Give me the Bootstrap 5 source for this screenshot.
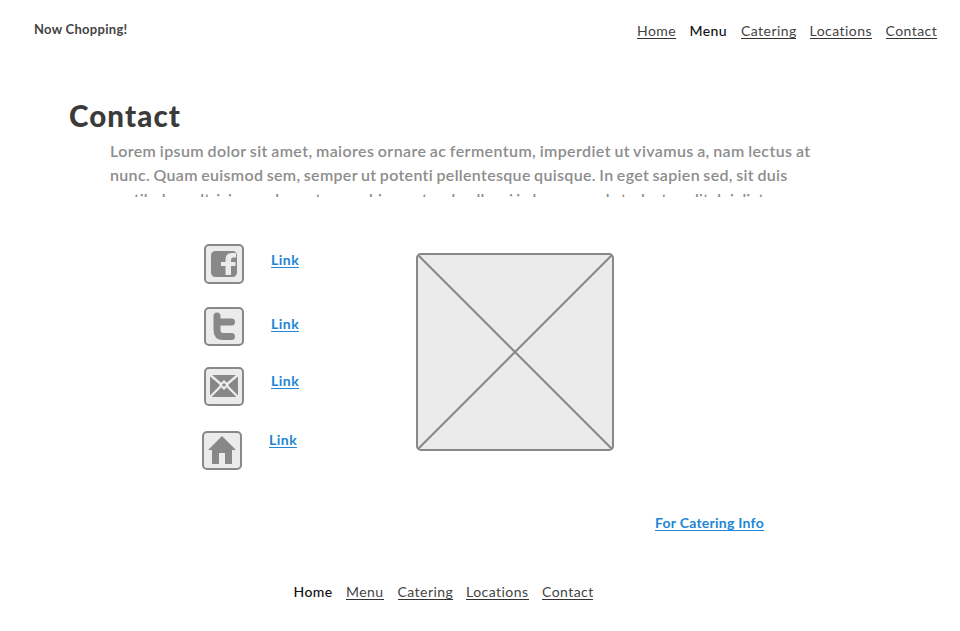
<!DOCTYPE html>
<html lang="en">
<head>
<meta charset="utf-8">
<meta name="viewport" content="width=device-width, initial-scale=1">
<title>Now Chopping! - Contact</title>
<link href="https://cdn.jsdelivr.net/npm/bootstrap@5.3.0/dist/css/bootstrap.min.css" rel="stylesheet">
<style>
body{font-family:"Lato","Noto Sans",sans-serif;color:#3b3b3b;background:#fff;height:631px;overflow:hidden}
.topbar{height:60px;padding:20px 23.5px 0 34px}
.brand-name{font-size:13px;font-weight:700;line-height:19px;letter-spacing:.28px;color:#444}
.site-nav{font-size:14px;line-height:20px;column-gap:13.5px}
.site-nav a{color:#444;text-decoration:none;border-bottom:1px solid #333;height:18px;line-height:20px;white-space:nowrap;letter-spacing:.45px}
.site-nav a.current{color:#111;border-color:transparent;font-weight:500;letter-spacing:.4px}
.w-home{width:39px}.w-menu{width:38px}.w-cat{width:55px}.w-loc{width:62.5px}.w-con{width:51px}
.topbar .site-nav{padding-top:1px}
.page-title{font-size:29.5px;font-weight:900;line-height:36px;margin:38px 0 0 69px;color:#3b3b3b;letter-spacing:1.1px}
.intro{margin:5px 0 0 110px;width:740px;height:58px;overflow:hidden;font-size:16px;line-height:24px;font-weight:600;color:#8d8d8d;white-space:nowrap;word-spacing:-.9px}
.line-a{letter-spacing:.4px}.line-b{letter-spacing:.32px}.line-c{letter-spacing:.06px}
.details{padding:47px 0 0 202px;height:312px}
.channels{width:214px}
.channel{height:40px;column-gap:27px;margin-left:2px}
.channel svg{flex:none}
.channel.short{height:39px}
.blue-link{color:#2185d6;font-size:14px;font-weight:700;line-height:18px;height:17px;border-bottom:1px solid #2185d6;text-decoration:none;white-space:nowrap;letter-spacing:.25px}
.channel .blue-link{letter-spacing:.5px}
.first-link{margin-top:7px}.mail-link{margin-top:5px}
.space-bird{margin-top:23px}.space-mail{margin-top:21px}.space-home{margin-top:25px}
.photo{margin-top:9px}
.catering{padding-left:655px;height:73px;padding-top:5px}
.bottom{padding-left:293.5px}
</style>
</head>
<body>
<header class="topbar d-flex justify-content-between align-items-start">
  <span class="brand-name">Now Chopping!</span>
  <nav class="site-nav d-flex">
    <a class="w-home" href="#">Home</a><a class="w-menu current" href="#">Menu</a><a class="w-cat" href="#">Catering</a><a class="w-loc" href="#">Locations</a><a class="w-con" href="#">Contact</a>
  </nav>
</header>
<main>
  <h1 class="page-title">Contact</h1>
  <div class="intro">
    <div class="line-a">Lorem ipsum dolor sit amet, maiores ornare ac fermentum, imperdiet ut vivamus a, nam lectus at</div>
    <div class="line-b">nunc. Quam euismod sem, semper ut potenti pellentesque quisque. In eget sapien sed, sit duis</div>
    <div class="line-c">vestibulum ultricies, sed a metus morbi nec at sed nulla mi in hac, eu sed at a lectus elit dui dictum</div>
  </div>
  <section class="details d-flex">
    <div class="channels">
      <div class="channel d-flex">
        <svg width="40" height="40" viewBox="0 0 40 40"><rect x="1" y="1" width="38" height="38" rx="4" fill="#ebebeb" stroke="#888" stroke-width="2"/><rect x="7" y="7" width="26" height="26" rx="4.5" fill="#888"/><path d="M21.5 31V22H17V18H21.5V16Q21.5 9 28 9H32V13.5H29.5Q27 13.5 27 16V18H31.5V22H27V31Z" fill="#ebebeb"/></svg>
        <a class="blue-link first-link" href="#">Link</a>
      </div>
      <div class="channel short space-bird d-flex">
        <svg width="40" height="39" viewBox="0 0 40 39"><rect x="1" y="1" width="38" height="37" rx="4" fill="#ebebeb" stroke="#888" stroke-width="2"/><path d="M13 9V23Q13 29.5 19 29.5H27.5M13 15H27.5" fill="none" stroke="#888" stroke-width="7" stroke-linecap="round"/></svg>
        <a class="blue-link mt-2" href="#">Link</a>
      </div>
      <div class="channel short space-mail d-flex">
        <svg width="40" height="39" viewBox="0 0 40 39"><rect x="1" y="1" width="38" height="37" rx="4" fill="#ebebeb" stroke="#888" stroke-width="2"/><path d="M6 8H34V30H6Z" fill="#888"/><path d="M5 7L18 18M35 7L22 18M5 31L18 18M35 31L22 18" stroke="#ebebeb" stroke-width="2.4"/><path d="M16.5 18L20 14.5L23.5 18L20 21.5Z" fill="#888" stroke="#ebebeb" stroke-width="2.2"/></svg>
        <a class="blue-link mail-link" href="#">Link</a>
      </div>
      <div class="channel short space-home d-flex ms-0">
        <svg width="40" height="39" viewBox="0 0 40 39"><rect x="1" y="1" width="38" height="37" rx="4" fill="#ebebeb" stroke="#888" stroke-width="2"/><path d="M20 5L34 19H30V33H23V22H17V33H10V19H6Z" fill="#888"/></svg>
        <a class="blue-link" href="#">Link</a>
      </div>
    </div>
    <svg class="photo" width="198" height="198" viewBox="0 0 198 198"><rect x="1" y="1" width="196" height="196" rx="4" fill="#ebebeb" stroke="#888" stroke-width="2"/><path d="M2 2L196 196M196 2L2 196" stroke="#888" stroke-width="2"/></svg>
  </section>
  <div class="catering d-flex"><a class="blue-link" href="#">For Catering Info</a></div>
</main>
<footer class="bottom">
  <nav class="site-nav d-flex">
    <a class="w-home current" href="#">Home</a><a class="w-menu" href="#">Menu</a><a class="w-cat" href="#">Catering</a><a class="w-loc" href="#">Locations</a><a class="w-con" href="#">Contact</a>
  </nav>
</footer>
<script src="https://cdn.jsdelivr.net/npm/bootstrap@5.3.0/dist/js/bootstrap.bundle.min.js"></script>
</body>
</html>
